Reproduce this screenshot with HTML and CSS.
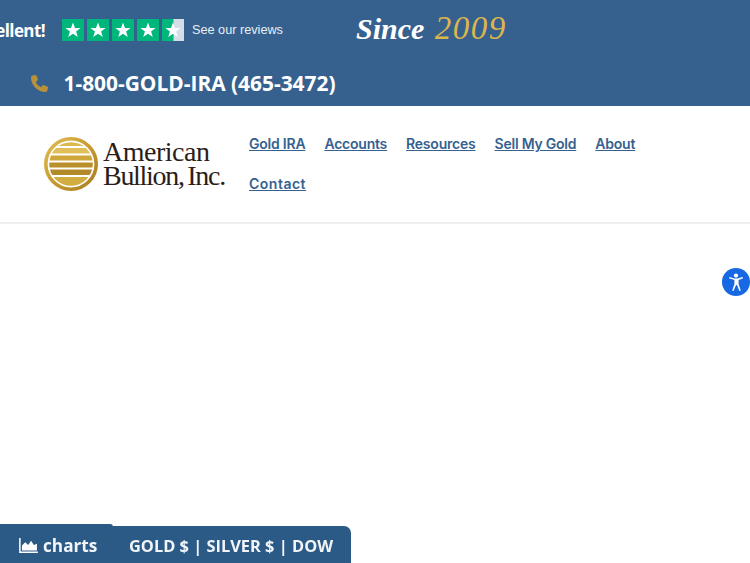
FILE: index.html
```html
<!DOCTYPE html>
<html lang="en">
  <head>
    <meta charset="UTF-8" />
    <meta name="viewport" content="width=device-width, initial-scale=1.0" />
    <title>American Bullion</title>
    <link rel="stylesheet" href="styles.css">
  </head>
  <body>
    <div class="top-bar">
      <div class="top-row">
        <span class="excellent">Excellent!</span>
        <div class="stars">
          <svg class="star-box" viewBox="0 0 22 22"><rect width="22" height="22" fill="#00b67a"/><polygon points="11,3.5 13,9 18.6,9 14.1,12.4 15.8,18 11,14.7 6.2,18 7.9,12.4 3.4,9 9,9" fill="#fff"/></svg>
          <svg class="star-box" viewBox="0 0 22 22"><rect width="22" height="22" fill="#00b67a"/><polygon points="11,3.5 13,9 18.6,9 14.1,12.4 15.8,18 11,14.7 6.2,18 7.9,12.4 3.4,9 9,9" fill="#fff"/></svg>
          <svg class="star-box" viewBox="0 0 22 22"><rect width="22" height="22" fill="#00b67a"/><polygon points="11,3.5 13,9 18.6,9 14.1,12.4 15.8,18 11,14.7 6.2,18 7.9,12.4 3.4,9 9,9" fill="#fff"/></svg>
          <svg class="star-box" viewBox="0 0 22 22"><rect width="22" height="22" fill="#00b67a"/><polygon points="11,3.5 13,9 18.6,9 14.1,12.4 15.8,18 11,14.7 6.2,18 7.9,12.4 3.4,9 9,9" fill="#fff"/></svg>
          <svg class="star-box" viewBox="0 0 22 22"><rect width="22" height="22" fill="#d5dee8"/><rect width="11.5" height="22" fill="#00b67a"/><polygon points="11,3.5 13,9 18.6,9 14.1,12.4 15.8,18 11,14.7 6.2,18 7.9,12.4 3.4,9 9,9" fill="#fff"/></svg>
        </div>
        <span class="see-reviews">See our reviews</span>
        <span class="since">Since <em>2009</em></span>
      </div>
      <div class="phone-row">
        <svg class="phone-icon" viewBox="0 0 512 512"><path fill="#b8923a" d="M164.9 24.6c-7.7-18.6-28-28.5-47.4-23.2l-88 24C12.1 30.2 0 46 0 64c0 247.4 200.6 448 448 448 18 0 33.8-12.1 38.6-29.5l24-88c5.3-19.4-4.6-39.7-23.2-47.4l-96-40c-16.3-6.8-35.2-2.1-46.3 11.6L304.7 368c-70.4-33.3-127.4-90.3-160.7-160.7l49.3-40.3c13.7-11.2 18.4-30 11.6-46.3l-40-96z"/></svg>
        <span class="phone-number">1-800-GOLD-IRA (465-3472)</span>
      </div>
    </div>

    <div class="header">
      <div class="logo">
        <svg class="logo-mark" viewBox="0 0 54 54">
          <defs>
            <linearGradient id="goldGrad" x1="0" y1="0" x2="1" y2="1">
              <stop offset="0" stop-color="#e0bd55"/>
              <stop offset="0.5" stop-color="#c79a2e"/>
              <stop offset="1" stop-color="#a87f24"/>
            </linearGradient>
            <clipPath id="discClip"><circle cx="27" cy="27" r="21.8"/></clipPath>
          </defs>
          <circle cx="27" cy="27" r="25.2" fill="none" stroke="url(#goldGrad)" stroke-width="3.6"/>
          <g clip-path="url(#discClip)">
            <rect x="0" y="4" width="54" height="5" fill="#dcb94f"/>
            <rect x="0" y="11" width="54" height="5.5" fill="#e0bf58"/>
            <rect x="0" y="18.5" width="54" height="5" fill="#cfa63a"/>
            <rect x="0" y="25.5" width="54" height="5" fill="#b98f2a"/>
            <rect x="0" y="32.5" width="54" height="5.5" fill="#b38a2a"/>
            <rect x="0" y="40" width="54" height="10" fill="#d2ad40"/>
          </g>
        </svg>
        <div class="logo-text">
          <span class="logo-line-1">American</span>
          <span class="logo-line-2">Bullion, Inc.</span>
        </div>
      </div>
      <ul class="nav">
        <li><a href="#">Gold IRA</a></li>
        <li><a href="#">Accounts</a></li>
        <li><a href="#">Resources</a></li>
        <li><a href="#">Sell My Gold</a></li>
        <li><a href="#">About</a></li>
        <li><a href="#">Contact</a></li>
      </ul>
    </div>

    <!-- accessibility widget -->
    <div class="a11y-btn">
      <svg viewBox="0 0 28 28" width="28" height="28">
        <circle cx="14" cy="14" r="14" fill="#1668e3"/>
        <circle cx="14" cy="7.6" r="2.1" fill="#fff"/>
        <path fill="#fff" d="M7 10.2l.5-1.3 5 1.5h3l5-1.5.5 1.3-4.4 1.8v4l2.2 6.4-1.4.6-2.4-6h-1l-2.4 6-1.4-.6 2.2-6.4v-4z"/>
      </svg>
    </div>

    <div class="ticker">
      <div class="charts-tab">
        <svg class="charts-icon" viewBox="0 0 20 16"><path fill="#fff" d="M0 0h1.6v14.4H20V16H0z"/><path fill="#fff" d="M3 13.4V8l3.5-3.5 3.2 3 3-4.5 3 4.5 3.3-1.5v7.4z"/></svg>
        <span>charts</span>
      </div>
      <div class="ticker-tab">GOLD $ | SILVER $ | DOW</div>
    </div>
  </body>
</html>
```

FILE: styles.css
```css
body {
  margin: 0;
  padding: 0;
  background-color: #fff;
  font-family: "Open Sans", Arial, sans-serif;
  height: 563px;
  overflow: hidden;
}

.top-bar {
  background-color: #36618f;
  height: 106px;
  color: #fff;
  overflow: hidden;
}

.top-row {
  display: flex;
  align-items: center;
  height: 60px;
  margin-left: -31px;
}

.excellent {
  font-size: 17px;
  font-weight: 700;
  letter-spacing: -0.6px;
  width: 93px;
  white-space: nowrap;
}

.stars {
  display: flex;
  gap: 3px;
}

.star-box {
  width: 22px;
  height: 22px;
  display: block;
}

.see-reviews {
  font-family: "Liberation Sans", Arial, sans-serif;
  font-size: 12.7px;
  margin-left: 8px;
  color: #e8eef4;
  width: 164px;
}

.since {
  font-family: "Liberation Serif", serif;
  font-style: italic;
  font-weight: 700;
  font-size: 30px;
  white-space: nowrap;
  padding-bottom: 3px;
}

.since em {
  color: #dcb64c;
  font-weight: 400;
  font-size: 33px;
  margin-left: 3px;
  letter-spacing: 1.5px;
}

.phone-row {
  display: flex;
  align-items: center;
  padding-left: 31px;
  height: 46px;
}

.phone-icon {
  width: 17px;
  height: 17px;
  margin-right: 15.5px;
}

.phone-number {
  font-size: 20.9px;
  font-weight: 700;
  white-space: nowrap;
}

.header {
  display: flex;
  align-items: center;
  height: 116px;
  border-bottom: 2px solid #eeeeee;
  padding-left: 44px;
}

.logo {
  display: flex;
  align-items: center;
  gap: 5px;
  width: 205px;
  flex-shrink: 0;
}

.logo-mark {
  width: 54px;
  height: 54px;
  display: block;
}

.logo-text {
  font-family: "Liberation Serif", serif;
  font-size: 28px;
  line-height: 24px;
  color: #2b1d1a;
  display: flex;
  flex-direction: column;
  white-space: nowrap;
}

.logo-line-1 {
  letter-spacing: -0.5px;
}

.logo-line-2 {
  letter-spacing: -1.3px;
  word-spacing: -2px;
}

.nav {
  list-style: none;
  margin: 0;
  padding: 0;
  display: flex;
  flex-wrap: wrap;
  column-gap: 19px;
  width: 440px;
}

.nav li {
  line-height: 39.6px;
}

.nav a {
  color: #36618f;
  font-family: Inter, Arial, sans-serif;
  font-size: 14px;
  font-weight: 600;
  letter-spacing: -0.22px;
}

.nav li:last-child a {
  letter-spacing: 0.5px;
}

.a11y-btn {
  position: fixed;
  top: 268px;
  right: 0;
  width: 28px;
  height: 28px;
}

.ticker {
  position: fixed;
  left: 0;
  bottom: 0;
  display: flex;
  align-items: flex-end;
  color: #f2f5f8;
  font-weight: 700;
}

.charts-tab {
  background-color: #2c5a87;
  height: 39px;
  width: 113px;
  box-sizing: border-box;
  padding: 3px 0 0 19px;
  display: flex;
  align-items: center;
  gap: 5px;
  font-size: 17.2px;
  border-top-right-radius: 3px;
}

.charts-icon {
  width: 19px;
  height: 15px;
}

.ticker-tab {
  background-color: #2c5a87;
  height: 37px;
  box-sizing: border-box;
  padding: 8px 18px 0 16px;
  font-size: 16.4px;
  line-height: 24px;
  border-top-right-radius: 7px;
  white-space: nowrap;
}
```
